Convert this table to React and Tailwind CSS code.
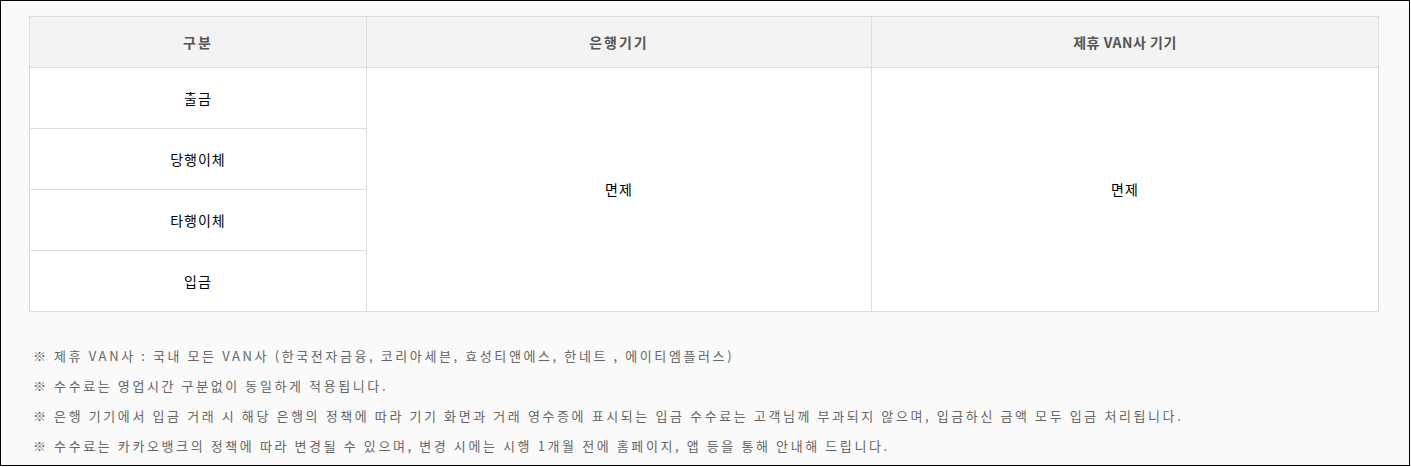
import React from 'react';

const rows = ['출금', '당행이체', '타행이체', '입금'];

const notes = [
  '※ 제휴 VAN사 : 국내 모든 VAN사 (한국전자금융, 코리아세븐, 효성티앤에스, 한네트 , 에이티엠플러스)',
  '※ 수수료는 영업시간 구분없이 동일하게 적용됩니다.',
  '※ 은행 기기에서 입금 거래 시 해당 은행의 정책에 따라 기기 화면과 거래 영수증에 표시되는 입금 수수료는 고객님께 부과되지 않으며, 입금하신 금액 모두 입금 처리됩니다.',
  '※ 수수료는 카카오뱅크의 정책에 따라 변경될 수 있으며, 변경 시에는 시행 1개월 전에 홈페이지, 앱 등을 통해 안내해 드립니다.',
];

const App = () => {
  return (
    <div className="bg-white w-[1411px] h-[467px]">
      <div
        className="w-[1410px] h-[466px] border border-black bg-[#fafafa] pt-[15px] pl-[28px]"
        style={{ fontFamily: '"Noto Sans CJK KR", "Noto Sans", sans-serif' }}
      >
        <table className="w-[1349px] border-collapse table-fixed bg-white">
          <colgroup>
            <col className="w-[337px]" />
            <col className="w-[505px]" />
            <col className="w-[507px]" />
          </colgroup>
          <thead>
            <tr className="h-[51px] bg-[#f3f3f3]">
              <th className="border border-[#dcdcdc] text-[14px] font-bold tracking-[2px] text-[#555]">구분</th>
              <th className="border border-[#dcdcdc] text-[14px] font-bold tracking-[2px] text-[#555]">은행기기</th>
              <th className="border border-[#dcdcdc] text-[14px] font-bold tracking-[0.5px] text-[#555]">제휴 VAN사 기기</th>
            </tr>
          </thead>
          <tbody>
            {rows.map((label, i) => (
              <tr key={label} className="h-[61px]">
                <td className="border border-[#dcdcdc] text-center text-[14px] tracking-[1px] text-black">{label}</td>
                {i === 0 && (
                  <>
                    <td rowSpan={4} className="border border-[#dcdcdc] text-center text-[14px] tracking-[1px] text-black">
                      면제
                    </td>
                    <td rowSpan={4} className="border border-[#dcdcdc] text-center text-[14px] tracking-[1px] text-black">
                      면제
                    </td>
                  </>
                )}
              </tr>
            ))}
          </tbody>
        </table>

        <ul className="mt-[29px] pl-[4px] text-[13px] tracking-[2.6px] text-[#666]">
          {notes.map((n) => (
            <li key={n} className="h-[30px] leading-[30px] whitespace-nowrap">
              {n}
            </li>
          ))}
        </ul>
      </div>
    </div>
  );
};

export default App;
